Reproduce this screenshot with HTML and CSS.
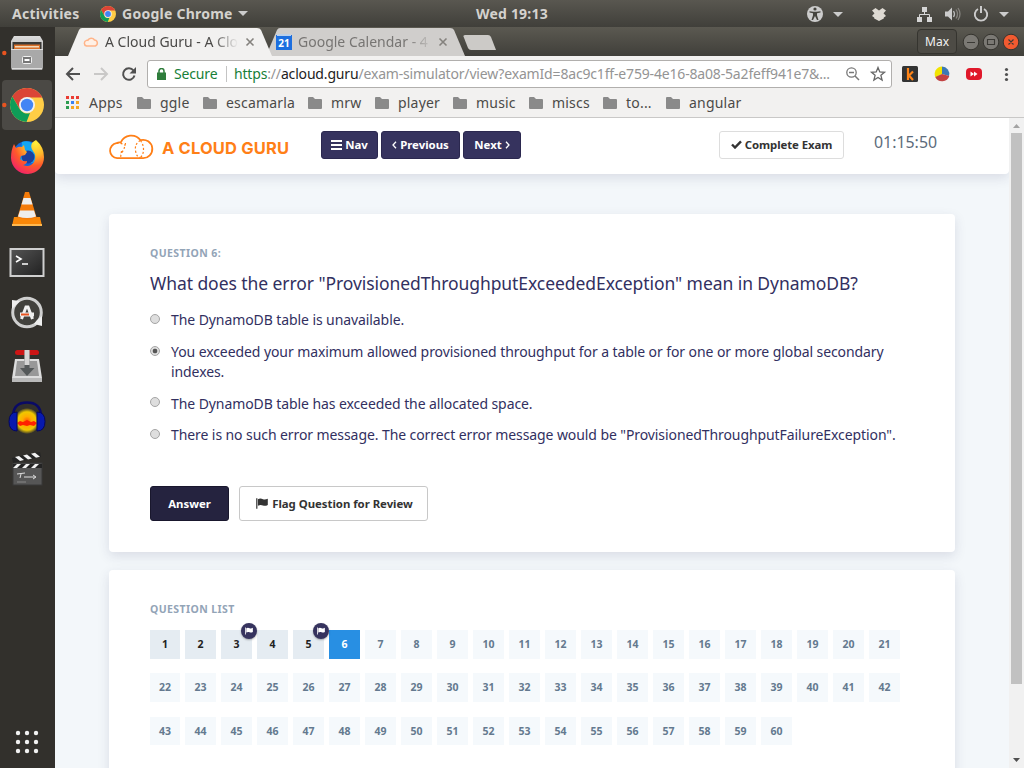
FILE: index.html
```html
<!DOCTYPE html>
<html lang="en">
<head>
<meta charset="utf-8">
<title>A Cloud Guru - Exam Simulator</title>
<link rel="stylesheet" href="styles.css">
</head>
<body>
<svg class="defs" width="0" height="0">
  <defs>
    <linearGradient id="metal" x1="0" y1="0" x2="0" y2="1"><stop offset="0" stop-color="#dcdcdc"/><stop offset="1" stop-color="#8c8c8c"/></linearGradient>
    <linearGradient id="term" x1="0" y1="0" x2="1" y2="1"><stop offset="0" stop-color="#555"/><stop offset="1" stop-color="#202020"/></linearGradient>
    <radialGradient id="fox" cx=".75" cy=".1" r="1"><stop offset="0" stop-color="#fff03a"/><stop offset=".35" stop-color="#ffb52a"/><stop offset=".65" stop-color="#ff5a2a"/><stop offset="1" stop-color="#f1206b"/></radialGradient>
    <radialGradient id="flame"><stop offset="0" stop-color="#ff5b00"/><stop offset=".35" stop-color="#ffac00"/><stop offset=".7" stop-color="#f0c800"/><stop offset="1" stop-color="#ffd800" stop-opacity="0"/></radialGradient>
    <symbol id="chrome" viewBox="0 0 34 34">
      <circle cx="17" cy="17" r="17" fill="#ffcd46"/>
      <path d="M2.3 8.5A17 17 0 0 1 31.700 8.5L32 9.5H17L9.800 21z" fill="#db4437"/>
      <path d="M2.3 8.5L9.600 21A8.500 8.500 0 0 0 20 25L16.500 34A17 17 0 0 1 2.300 8.500z" fill="#0f9d58"/>
      <circle cx="17" cy="17" r="8" fill="#f1f1f1"/><circle cx="17" cy="17" r="6.200" fill="#4285f4"/>
    </symbol>
    <symbol id="folder" viewBox="0 0 14 12"><path d="M1 0h4l2 2h6a1 1 0 0 1 1 1v8a1 1 0 0 1-1 1H1a1 1 0 0 1-1-1V1a1 1 0 0 1 1-1z" fill="#8a8a8a"/></symbol>
    <symbol id="flag" viewBox="0 0 12 11"><path d="M.2.3h1.200v10.400H.2z" fill="currentColor"/><path d="M1.900 1.300C4-.1 5.300.5 7 1.200 8.800 2 10 1.400 11.800.7V6.900C9.800 8 8.500 8 6.900 7.400 5.200 6.700 3.800 6.700 1.900 7.700z" fill="currentColor"/></symbol>
  </defs>
</svg>

<header class="panel">
  <span class="panel-activities">Activities</span>
  <svg class="panel-chrome" width="16" height="16"><use href="#chrome"/></svg>
  <span class="panel-app">Google Chrome</span>
  <svg class="panel-caret" width="10" height="5"><path d="M0 0h10L5 5z" fill="#ccc"/></svg>
  <span class="panel-clock">Wed 19:13</span>
  <svg class="panel-tray" width="210" height="20" viewBox="804 3 210 20">
    <circle cx="815" cy="13" r="8" fill="#ccc"/>
    <g fill="#45443e"><circle cx="815" cy="8" r="1.600"/><path d="M809.500 10.200l4 .6h3l4-.6v1.300l-3.500.8v2l1.500 4.700h-1.500l-2-4-2 4h-1.500l1.500-4.700v-2l-3.500-.8z"/></g>
    <path d="M833 11h10l-5 5z" fill="#ccc"/>
    <path d="M875.500 7l3.500 2.500L882.500 7l3.500 2.500-2.500 2.700 2.500 2.800-2.200 1.500v1L879 20l-4.800-2.500v-1L872 15l2.500-2.800L872 9.500z" fill="#ddd9d2"/>
    <path d="M922 6h5v5h-5zM917 16h5v5h-5zM927 16h5v5h-5z" fill="#d5d5d5"/><path d="M924.500 11v2.500M919.500 16v-2.500h10V16" fill="none" stroke="#d5d5d5"/>
    <path d="M945 10.500h3l4-4v13l-4-4h-3z" fill="#ccc"/><path d="M953.500 10q2 3 0 6" fill="none" stroke="#bbb" stroke-width="1.300"/><path d="M956 8.500q3 4.500 0 9M958 7q4 6 0 12" fill="none" stroke="#85837e" stroke-width="1.300"/>
    <path d="M978 8a6.200 6.200 0 1 0 6 0" fill="none" stroke="#ccc" stroke-width="1.900"/><path d="M981 5v7" stroke="#ccc" stroke-width="2"/>
    <path d="M999 11h10l-5 5z" fill="#ccc"/>
  </svg>
</header>

<div class="desktop">
  <nav class="dock">
    <svg width="55" height="741" viewBox="0 27 55 741">
      <circle cx="4.300" cy="53" r="2.200" fill="#e95420"/>
      <path d="M14 36h26l3 5v26l-1 3H12l-1-3V41z" fill="url(#metal)"/><path d="M12.500 42h29v8h-29z" fill="#3b3936"/><path d="M14 44.500h26V50H14z" fill="#d9702a"/><path d="M15 46h24v1.500H15z" fill="#f2d8b8"/>
      <path d="M11 49h32V67l-1 3H12l-1-3z" fill="#a9a9a9"/><path d="M11 49.500h32M12 68.500h30" stroke="#dedede" fill="none"/>
      <rect x="22.500" y="56.500" width="9" height="7" rx="1" fill="#777" stroke="#f2f2f2"/><path d="M24.500 60h5" stroke="#fff" stroke-width="2"/>
      <rect x="2" y="80" width="50" height="50" rx="4" fill="#4b4945"/>
      <circle cx="4.300" cy="105" r="2.200" fill="#e95420"/>
      <use href="#chrome" x="10" y="88" width="34" height="34"/>
      <g transform="translate(0 -1)">
        <circle cx="27" cy="156" r="14" fill="#1467d8"/><path d="M22 143q10-3 15 8t-5 13H20z" fill="#12a6f4"/>
        <circle cx="28" cy="158" r="6.500" fill="#1c3f9c"/>
        <path d="M14 145l2 4q3-2 6-1l2-2 1 5 2 2-2 3-4 1-1 3q3 3 7 2 0 3-4 4 7 3 11-3 3-6-1-11-3-4-1-8 2-2 4-3 8 7 8 17a16.500 16.500 0 0 1-33 1Q11 151 14 145z" fill="url(#fox)"/>
      </g>
      <path d="M25 192h4l8 27q-10 5-20 0z" fill="#f47b0a"/><path d="M23.500 198h7l2 6.500h-11zM20 210.500h14l2 6q-9 3-18 0z" fill="#eee"/><path d="M14 217h3q10 5 20 0h3l2 9H12z" fill="#f98708"/><path d="M12 224h30v2H12z" fill="#ffb84e"/>
      <rect x="10.500" y="249" width="33" height="27" fill="url(#term)" stroke="#cfcfcf" stroke-width="2"/><path d="M16 256l5 3-5 3M22 264h6" fill="none" stroke="#fff" stroke-width="1.600"/>
      <circle cx="27" cy="312.500" r="14.300" fill="#42413d" stroke="#cfcfcf" stroke-width="3"/><path d="M12 309v-9l8 1-3 3zM42 316v10l-8-2 3-4z" fill="#eee"/><path d="M21.500 319l4.500-12h2l4.500 12" fill="none" stroke="#f2f2f2" stroke-width="3"/><path d="M20 314.500h14" stroke="#eee" stroke-width="4"/><path d="M21 314.500h8" stroke="#e95420" stroke-width="2"/>
      <path d="M15 359h24l3 19v3H12v-3z" fill="#ddd"/><path d="M17 361h20l2 15H15z" fill="#989898"/><path d="M12 378h30v4H12z" fill="#b9b9b9"/><rect x="15" y="350" width="24" height="5" rx="2.500" fill="#cd1515"/><path d="M24.500 351h5v17h5L27 376l-7-8h4.500z" fill="#55595a"/><path d="M24.500 350h5v15h-5z" fill="#d5d5d5"/>
      <ellipse cx="27" cy="421" rx="13" ry="13" fill="url(#flame)"/><path d="M17 423l3-2 3 1 4-2 4 2 3-1 3 2-3 3-4-1-3 1-4-1-3 1z" fill="#f20"/>
      <path d="M13 415q1-12.500 14-12.500T41 415" fill="none" stroke="#0a0a65" stroke-width="2.500"/><path d="M17 412v19q-8 0-8-9.500T17 412zM37 412v19q8 0 8-9.500T37 412z" fill="#0719ae" stroke="#04075e"/>
      <rect x="13" y="463" width="29" height="22" fill="#565656" stroke="#383838"/><path d="M12 458l28-6 1 5-28 6z" fill="#242424"/><path d="M15 457l5 4 4-1-5-4zM23 455.500l5 4 4-1-5-4zM31 453.800l5 4 4-1-5-4z" fill="#f2f2f2"/><path d="M13 464h29v4H13z" fill="#242424"/><path d="M17 464h4l-4 4h-4zM26 464h4l-4 4h-4zM35 464h4l-4 4h-4z" fill="#f2f2f2"/><path d="M17 474l8-1M21 474l-1 4M24 477h11M33 475l3 2-3 2" fill="none" stroke="#ddd"/><path d="M17 482h9" stroke="#888"/>
      <g fill="#f2f2f2"><circle cx="18" cy="733" r="2.200"/><circle cx="27" cy="733" r="2.200"/><circle cx="36" cy="733" r="2.200"/><circle cx="18" cy="742" r="2.200"/><circle cx="27" cy="742" r="2.200"/><circle cx="36" cy="742" r="2.200"/><circle cx="18" cy="751" r="2.200"/><circle cx="27" cy="751" r="2.200"/><circle cx="36" cy="751" r="2.200"/></g>
    </svg>
  </nav>

  <main class="window">
    <div class="tabstrip">
      <svg class="tab-shapes" width="969" height="29" viewBox="55 27 969 29">
        <path d="M266 56l11-26q1-2 3-2H450q3 0 4 2l11 26z" fill="#d0cecc"/>
        <path d="M68 56l11-26q1-2 3-2H257q3 0 4 2l11 26z" fill="#f2f1f0"/>
        <path d="M463.500 36.500Q463 35 465 35h23q2 0 3 2l5 13h-25q-2 0-3-2z" fill="#cccac7"/>
        <path d="M86.500 46a2.900 2.900 0 0 1 0-5.600q.7-.2 1.300 0a3.900 3.900 0 0 1 6.700-.4 3.100 3.100 0 0 1 .8 6z" fill="#fff0e5" stroke="#ffb489" stroke-width="1.500"/>
        <path d="M246.500 38.500l7 7m0-7l-7 7M439.500 38.500l7 7m0-7l-7 7" stroke="#85827e" stroke-width="1.600"/>
        <path d="M276 35h16v15h-16z" fill="#1d6fdf"/><path d="M277 34h14v2h-14z" fill="#bcd0e8"/>
      </svg>
      <span class="tab-title tab-title-active">A Cloud Guru - A Clo</span>
      <span class="tab-date">21</span>
      <span class="tab-title tab-title-idle">Google Calendar - 4</span>
      <span class="profile">Max</span>
      <svg class="winctl" width="58" height="18" viewBox="962 33 58 18">
        <g stroke="#35342f"><circle cx="971" cy="42" r="7.800" fill="#7b7974"/><circle cx="991" cy="42" r="7.800" fill="#7b7974"/><circle cx="1011" cy="42" r="7.800" fill="#f15a30"/></g>
        <path d="M967 42.500h8M987.500 39.500h7v5h-7zM1008.500 39.500l5 5m0-5l-5 5" fill="none" stroke="#3a3935" stroke-width="1.100"/>
      </svg>
    </div>
    <div class="toolbar">
      <svg class="nav-icons" width="92" height="32" viewBox="55 58 92 32">
        <path d="M80 74H67.500M73 68l-6 6 6 6" fill="none" stroke="#505050" stroke-width="2"/>
        <path d="M94 74h12.500M101 68l6 6-6 6" fill="none" stroke="#c9c8c7" stroke-width="2"/>
        <path d="M133.500 70.500a5.800 5.800 0 1 0 1 5" fill="none" stroke="#505050" stroke-width="2"/><path d="M136 67v6.500h-6.500z" fill="#505050"/>
      </svg>
      <div class="omnibox">
        <svg width="9" height="12" viewBox="0 0 9 12"><path d="M0 4.500h9V12H0z" fill="#2f7d3c"/><path d="M2 5V3a2.500 2.500 0 0 1 5 0v2" fill="none" stroke="#2f7d3c" stroke-width="1.500"/></svg>
        <span class="secure">Secure</span>
        <span class="url"><span class="scheme">https</span>://<span class="host">acloud.guru</span>/exam-simulator/view?examId=8ac9c1ff-e759-4e16-8a08-5a2feff941e7&amp;...</span>
        <svg class="omni-icons" width="42" height="18" viewBox="845 65 42 18">
          <circle cx="851.500" cy="72.500" r="4.700" fill="none" stroke="#777" stroke-width="1.300"/><path d="M855 76l4 4M849 72.500h5" stroke="#777" stroke-width="1.500"/>
          <path d="M878 67.500l1.800 4.500 4.700.3-3.600 3 1.200 4.700-4.100-2.600-4.100 2.600 1.200-4.700-3.600-3 4.700-.3z" fill="none" stroke="#666" stroke-width="1.300"/>
        </svg>
      </div>
      <svg class="ext-icons" width="120" height="20" viewBox="900 64 120 20">
        <rect x="902" y="66" width="16" height="16" rx="1.500" fill="#333"/><path d="M908 68v12M913 71.500l-4 4 4 4.500" fill="none" stroke="#ff8417" stroke-width="2.200"/>
        <path d="M942 74l-6.500 3.500A7.500 7.500 0 0 1 942 66.500z" fill="#f2e400"/><path d="M942 74v-7.500a7.500 7.500 0 0 1 7 9.500z" fill="#3c79b5"/><path d="M942 74l7.300 2a7.500 7.500 0 0 1-14 1z" fill="#c34343"/>
        <rect x="966" y="68" width="16" height="12" rx="4" fill="#e0182a"/><path d="M970.500 71.500l3.500 2.500-3.500 2.500zM974 71.500l3.500 2.500-3.500 2.500z" fill="#fff"/>
        <g fill="#505050"><circle cx="1006.500" cy="69.500" r="1.600"/><circle cx="1006.500" cy="74.500" r="1.600"/><circle cx="1006.500" cy="79.500" r="1.600"/></g>
      </svg>
    </div>
    <div class="bookmarks">
      <span class="bm bm-apps"><svg width="13" height="13"><path d="M0 0h3v3H0zM5 0h3v3H5zM10 0h3v3h-3z" fill="#ea3c33"/><path d="M0 5h3v3H0zM0 10h3v3H0z" fill="#2d9b50"/><path d="M5 5h3v3H5z" fill="#3b82f0"/><path d="M10 5h3v3h-3zM5 10h3v3H5zM10 10h3v3h-3z" fill="#f5a623"/></svg>Apps</span>
      <span class="bm bm-ggle"><svg width="14" height="12"><use href="#folder"/></svg>ggle</span>
      <span class="bm bm-escamarla"><svg width="14" height="12"><use href="#folder"/></svg>escamarla</span>
      <span class="bm bm-mrw"><svg width="14" height="12"><use href="#folder"/></svg>mrw</span>
      <span class="bm bm-player"><svg width="14" height="12"><use href="#folder"/></svg>player</span>
      <span class="bm bm-music"><svg width="14" height="12"><use href="#folder"/></svg>music</span>
      <span class="bm bm-miscs"><svg width="14" height="12"><use href="#folder"/></svg>miscs</span>
      <span class="bm bm-to"><svg width="14" height="12"><use href="#folder"/></svg>to...</span>
      <span class="bm bm-angular"><svg width="14" height="12"><use href="#folder"/></svg>angular</span>
    </div>

    <div class="viewport">
      <div class="page">
        <div class="topnav">
          <svg class="logo" width="46" height="27" viewBox="0.5 0 46 27"><path d="M8.600 25.200A7.550 7.550 0 0 1 8 10.200q2-1.200 4.300-.8A11.500 11.500 0 0 1 32 7.200a9.200 9.200 0 1 1 2 18z" fill="none" stroke="#ff7f17" stroke-width="1.800"/><path d="M8 10.500q5-1 9 2M17 10q-1 7-5 11M13 18l-1 7M32 7.500q-6 3-5 10t5 7M32 7.500q3 4 3 9t-3 8" fill="none" stroke="#ff7f17" stroke-width="1.200" stroke-dasharray="2 2"/></svg>
          <span class="brand">A CLOUD GURU</span>
          <div class="nav-buttons">
            <span class="btn btn-nav"><svg width="11" height="10"><path d="M0 1h11M0 5h11M0 9h11" stroke="#fff" stroke-width="2"/></svg>Nav</span>
            <span class="btn btn-prev"><svg width="5" height="8"><path d="M4 .8L1 4l3 3.200" fill="none" stroke="#fff" stroke-width="1.300"/></svg>Previous</span>
            <span class="btn btn-next">Next<svg width="5" height="8"><path d="M1 .8L4 4 1 7.200" fill="none" stroke="#fff" stroke-width="1.300"/></svg></span>
          </div>
          <span class="btn btn-complete"><svg width="11" height="9"><path d="M1 4.500l3 3L10 1.300" fill="none" stroke="#333" stroke-width="2.400"/></svg>Complete Exam</span>
          <span class="timer">01:15:50</span>
        </div>
        <section class="card card-question">
          <div class="label label-question">QUESTION 6:</div>
          <h1 class="question">What does the error "ProvisionedThroughputExceededException" mean in DynamoDB?</h1>
          <ul class="options">
            <li class="option"><i class="radio"></i><span>The DynamoDB table is unavailable.</span></li>
            <li class="option"><i class="radio radio-on"></i><span>You exceeded your maximum allowed provisioned throughput for a table or for one or more global secondary<br>indexes.</span></li>
            <li class="option"><i class="radio radio-up"></i><span>The DynamoDB table has exceeded the allocated space.</span></li>
            <li class="option option-last"><i class="radio"></i><span>There is no such error message. The correct error message would be "ProvisionedThroughputFailureException".</span></li>
          </ul>
          <div class="actions">
            <span class="action action-answer">Answer</span>
            <span class="action action-flag"><svg width="12" height="11"><use href="#flag"/></svg>Flag Question for Review</span>
          </div>
        </section>
        <section class="card card-list">
          <div class="label label-list">QUESTION LIST</div>
          <div class="cells">
            <span class="cell seen">1</span><span class="cell seen">2</span><span class="cell seen">3<b class="badge"><svg width="8" height="8"><use href="#flag"/></svg></b></span><span class="cell seen">4</span><span class="cell seen">5<b class="badge"><svg width="8" height="8"><use href="#flag"/></svg></b></span><span class="cell current">6</span><span class="cell">7</span><span class="cell">8</span><span class="cell">9</span><span class="cell">10</span><span class="cell">11</span><span class="cell">12</span><span class="cell">13</span><span class="cell">14</span><span class="cell">15</span><span class="cell">16</span><span class="cell">17</span><span class="cell">18</span><span class="cell">19</span><span class="cell">20</span><span class="cell">21</span>
            <span class="cell">22</span><span class="cell">23</span><span class="cell">24</span><span class="cell">25</span><span class="cell">26</span><span class="cell">27</span><span class="cell">28</span><span class="cell">29</span><span class="cell">30</span><span class="cell">31</span><span class="cell">32</span><span class="cell">33</span><span class="cell">34</span><span class="cell">35</span><span class="cell">36</span><span class="cell">37</span><span class="cell">38</span><span class="cell">39</span><span class="cell">40</span><span class="cell">41</span><span class="cell">42</span>
            <span class="cell">43</span><span class="cell">44</span><span class="cell">45</span><span class="cell">46</span><span class="cell">47</span><span class="cell">48</span><span class="cell">49</span><span class="cell">50</span><span class="cell">51</span><span class="cell">52</span><span class="cell">53</span><span class="cell">54</span><span class="cell">55</span><span class="cell">56</span><span class="cell">57</span><span class="cell">58</span><span class="cell">59</span><span class="cell">60</span>
          </div>
        </section>
      </div>
      <div class="scrollbar">
        <svg width="7" height="4"><path d="M0 4L3.500 0 7 4z" fill="#a3a3a3"/></svg>
        <div class="thumb"></div>
        <svg class="arrow-down" width="7" height="4"><path d="M0 0h7L3.500 4z" fill="#505050"/></svg>
      </div>
    </div>
  </main>
</div>
</body>
</html>
```
FILE: styles.css
```css
* { box-sizing: border-box; }
body { margin: 0; width: 1024px; height: 768px; overflow: hidden; font-family: "Noto Sans", "Open Sans", sans-serif; color: #333; background: #32302c; }
svg { display: block; flex: none; }
span { white-space: nowrap; }
.defs { position: absolute; }

.panel { height: 27px; display: flex; align-items: center; background: linear-gradient(#595750, #403f3a); color: #d4d2ce; font-size: 14px; font-weight: 700; letter-spacing: .25px; line-height: 27px; }
.panel-activities { width: 88px; padding-left: 12px; }
.panel-chrome { margin-left: 12px; }
.panel-app { width: 117px; padding-left: 6px; }
.panel-caret { margin-left: 5px; }
.panel-clock { margin-left: 228px; width: 328px; letter-spacing: .2px; }
.panel-tray { overflow: hidden; }

.desktop { display: flex; height: 741px; }
.dock { width: 55px; background: #32302c; }
.window { width: 969px; display: flex; flex-direction: column; }

.tabstrip { height: 29px; display: flex; background: linear-gradient(#5b5951, #403f3a); line-height: 29px; font-size: 14px; color: #4b4a48; }
.tab-shapes { margin-right: -969px; }
.tab-title { position: relative; overflow: hidden; }
.tab-title-active { margin-left: 50px; width: 134px; -webkit-mask-image: linear-gradient(90deg, #000 108px, transparent 133px); }
.tab-date { position: relative; margin-left: 37px; width: 16px; text-align: center; color: #fff; font-size: 10px; font-weight: 700; line-height: 32px; }
.tab-title-idle { margin-left: 6px; width: 132px; color: #777573; -webkit-mask-image: linear-gradient(90deg, #000 108px, transparent 136px); }
.profile { position: relative; margin: 2px 0 0 487px; width: 40px; height: 25px; border: 1px solid #35342f; border-radius: 4px; background: #4d4b45; color: #f2f2f2; font-size: 12px; line-height: 24px; text-align: center; }
.winctl { position: relative; margin: 6px 0 0 5px; }

.toolbar { height: 34px; display: flex; background: #f2f1f0; }
.nav-icons { margin-top: 2px; }
.omnibox { margin-top: 4px; width: 745px; height: 28px; display: flex; align-items: center; background: #fff; border: 1px solid #b1afad; border-radius: 3px; padding-left: 9px; font-size: 14px; }
.secure { margin-left: 8px; padding-right: 9px; color: #188038; box-sizing: content-box; width: 43px; border-right: 1px solid #c4c4c4; line-height: 16px; letter-spacing: -.15px; }
.url { margin-left: 7px; width: 611px; color: #949494; letter-spacing: -.17px; }
.scheme { color: #188038; }
.host { color: #222; }
.omnibox .secure, .omnibox .url { margin-top: -1px; }
.ext-icons { margin: 8px 0 0 8px; }

.bookmarks { height: 28px; display: flex; padding-left: 11px; background: #f2f1f0; border-bottom: 1px solid #c9c8c7; font-size: 14px; letter-spacing: .2px; color: #4b4a48; }
.bm { display: flex; align-items: center; height: 25px; gap: 9px; }
.bm-apps { width: 71px; gap: 10px; }
.bm-ggle { width: 66px; }
.bm-escamarla { width: 105px; }
.bm-mrw { width: 67px; }
.bm-player { width: 78px; }
.bm-music { width: 76px; }
.bm-miscs { width: 74px; }
.bm-to { width: 63px; }

.viewport { height: 650px; display: flex; }
.page { width: 954px; overflow: hidden; background: #f3f7fa; }
.topnav { height: 56px; display: flex; padding-left: 54px; background: #fff; border-radius: 0 0 4px 4px; box-shadow: 0 4px 12px rgba(50, 50, 93, .13); }
.logo { margin-top: 15px; }
.brand { width: 159px; margin: 20px 0 0 7px; font: 700 16.500px/20px Inter, sans-serif; letter-spacing: .17px; color: #ff7f17; }
.nav-buttons { display: flex; gap: 3px; margin-top: 13px; height: 28px; }
.btn { display: flex; align-items: center; justify-content: center; border-radius: 3px; font-size: 11.400px; font-weight: 700; gap: 3px; height: 28px; padding-bottom: 1px; }
.nav-buttons .btn { background: #36335e; border: 1px solid #2b284f; color: #fff; }
.btn-nav { width: 57px; }
.btn-prev { width: 79px; }
.btn-next { width: 58px; }
.btn-complete { margin: 13px 0 0 198px; width: 125px; border: 1px solid #ddd; letter-spacing: -.08px; }
.timer { margin: 13px 0 0 30px; font-size: 15.900px; line-height: 22px; color: #5c6b7b; }

.card { margin-left: 54px; width: 846px; background: #fff; border-radius: 4px; box-shadow: 0 4px 12px rgba(50, 50, 93, .13); padding-left: 41px; }
.card-question { margin-top: 40px; height: 338px; padding-top: 31px; }
.card-list { margin-top: 18px; height: 230px; padding-top: 31px; }
.label { font-size: 10.500px; line-height: 16px; font-weight: 700; letter-spacing: .4px; color: #93a4b7; }
.question { margin: 10px 0 0; font-size: 17.500px; line-height: 24px; font-weight: 400; letter-spacing: -.07px; color: #32305f; white-space: nowrap; }
.options { list-style: none; margin: 15px 0 0; padding: 0; color: #32305f; font-size: 14px; line-height: 20px; letter-spacing: -.086px; }
.option { display: flex; margin-bottom: 12px; }
.option-last { margin-top: -1px; }
.radio { flex: none; width: 10px; height: 10px; margin: 4px 11px 0 0; border: 1px solid #a5a5a5; border-radius: 50%; background: #dedede; }
.radio-up { margin-top: 3px; }
.radio-on { background: radial-gradient(circle, #555 0 2px, #dedede 2.700px); }
.actions { display: flex; gap: 10px; margin-top: 41px; }
.action { display: flex; align-items: center; justify-content: center; height: 35px; border-radius: 3px; font-size: 11.400px; font-weight: 700; }
.action-answer { width: 79px; background: #25233f; border: 1px solid #19172d; color: #fff; }
.action-flag { width: 189px; padding-left: 2px; border: 1px solid #c8c8c8; gap: 4px; color: #333; letter-spacing: -.03px; }

.cells { display: grid; grid-template-columns: 30px repeat(20, 31px); grid-template-rows: 29px 30px 28px; column-gap: 5px; row-gap: 14px; margin-top: 13px; }
.cell { position: relative; height: 29px; display: flex; align-items: center; justify-content: center; padding-bottom: 1px; background: #f5f9fc; color: #64798f; font-size: 10.500px; font-weight: 700; }
.cell:nth-child(n+43) { height: 28px; padding-bottom: 0; }
.seen { background: #e5ecf2; color: #222; }
.current { background: #288fe3; color: #fff; }
.badge { position: absolute; z-index: 1; top: -7px; right: -5px; width: 16px; height: 16px; padding: 4px; border-radius: 50%; background: #36335e; color: #fff; box-shadow: 0 1px 2px rgba(0, 0, 0, .3); }

.scrollbar { width: 15px; background: #f1f1f1; display: flex; flex-direction: column; align-items: center; padding-top: 6px; }
.thumb { width: 11px; height: 551px; margin: 5px 0 0 0; background: #c1c1c1; }
.arrow-down { margin-top: 74px; }
```
